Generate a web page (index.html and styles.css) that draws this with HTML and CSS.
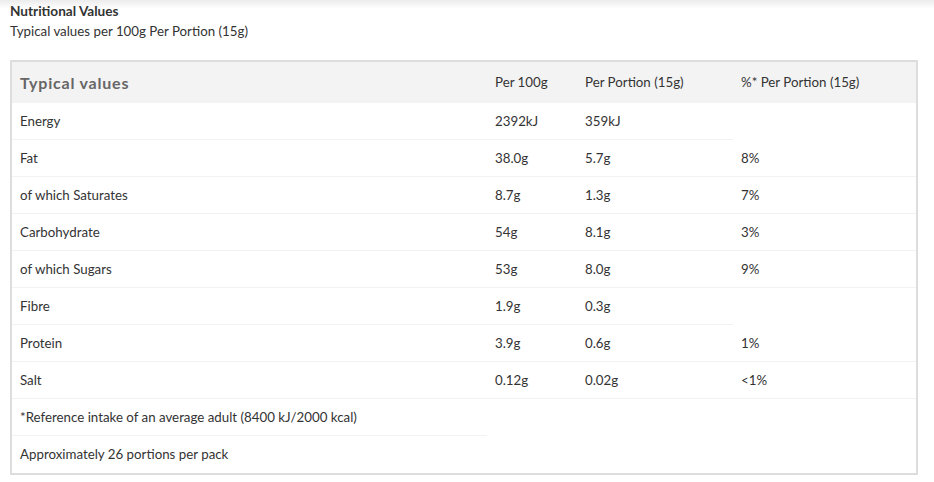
FILE: index.html
```html
<!DOCTYPE html>
<html lang="en">
<head>
    <meta charset="UTF-8">
    <meta name="viewport" content="width=device-width, initial-scale=1.0">
    <title>Nutritional Values</title>
    <link rel="stylesheet" href="styles.css">
</head>
<body>
    <div class="nutrition">
        <h4 class="nutrition-title">Nutritional Values</h4>
        <p class="nutrition-sub">Typical values per 100g Per Portion (15g)</p>

        <table class="nutrition-table">
            <colgroup>
                <col class="col-name">
                <col class="col-100">
                <col class="col-portion">
                <col class="col-ri">
            </colgroup>
            <thead>
                <tr>
                    <th class="th-main">Typical values</th>
                    <th>Per 100g</th>
                    <th>Per Portion (15g)</th>
                    <th>%* Per Portion (15g)</th>
                </tr>
            </thead>
            <tbody>
                <tr><td>Energy</td><td>2392kJ</td><td>359kJ</td><td class="empty"></td></tr>
                <tr><td>Fat</td><td>38.0g</td><td>5.7g</td><td>8%</td></tr>
                <tr><td>of which Saturates</td><td>8.7g</td><td>1.3g</td><td>7%</td></tr>
                <tr><td>Carbohydrate</td><td>54g</td><td>8.1g</td><td>3%</td></tr>
                <tr><td>of which Sugars</td><td>53g</td><td>8.0g</td><td>9%</td></tr>
                <tr><td>Fibre</td><td>1.9g</td><td>0.3g</td><td class="empty"></td></tr>
                <tr><td>Protein</td><td>3.9g</td><td>0.6g</td><td>1%</td></tr>
                <tr><td>Salt</td><td>0.12g</td><td>0.02g</td><td>&lt;1%</td></tr>
                <tr><td>*Reference intake of an average adult (8400 kJ/2000 kcal)</td><td class="empty" colspan="3"></td></tr>
                <tr class="last"><td>Approximately 26 portions per pack</td><td class="empty" colspan="3"></td></tr>
            </tbody>
        </table>
    </div>
</body>
</html>
```

FILE: styles.css
```css
body {
    font-family: Lato, "Open Sans", sans-serif;
    font-size: 13.3px;
    color: #333;
    margin: 0;
    padding: 0 16px 0 10px;
    background: linear-gradient(#ececec, #fff 9px) no-repeat;
    background-color: #fff;
}

.nutrition-title {
    margin: 0;
    padding-top: 1px;
    font-size: 13.6px;
    font-weight: bold;
    line-height: 20px;
}

.nutrition-sub {
    margin: 0 0 19px 0;
    line-height: 20px;
}

.nutrition-table {
    width: 908px;
    border: 2px solid #ddd;
    border-spacing: 0;
    table-layout: fixed;
}

.col-name { width: 475px; }
.col-100 { width: 90px; }
.col-portion { width: 156px; }
.col-ri { width: 183px; }

.nutrition-table th {
    background: #f3f3f3;
    font-weight: normal;
    text-align: left;
    line-height: 41px;
    padding: 0 8px;
}

.nutrition-table .th-main {
    font-size: 16px;
    font-weight: bold;
    color: #666;
    letter-spacing: 0.8px;
}

.nutrition-table td {
    line-height: 36px;
    padding: 0 8px;
    border-bottom: 1px solid #f2f2f2;
    white-space: nowrap;
}

.nutrition-table td.empty,
.nutrition-table .last td {
    border-bottom-color: transparent;
}
```
